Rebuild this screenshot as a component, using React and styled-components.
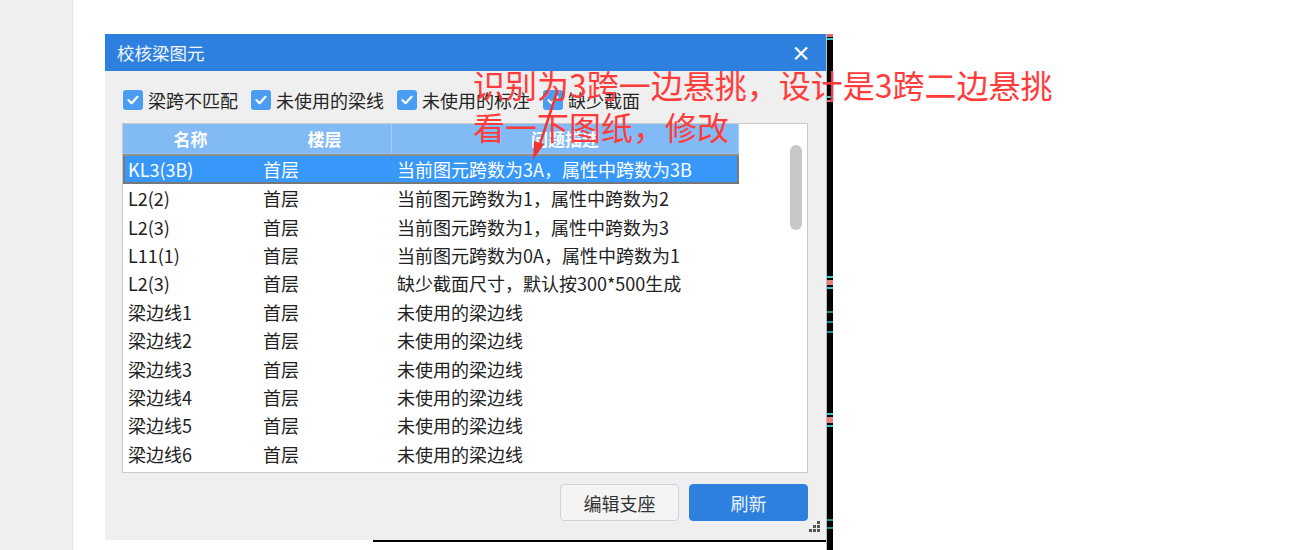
import React from "react";
import styled, { createGlobalStyle } from "styled-components";

const GlobalStyle = createGlobalStyle`
  html, body {
    margin: 0;
    padding: 0;
    background: #ffffff;
  }
  body {
    font-family: "Noto Sans CJK SC", "Noto Sans", sans-serif;
    overflow: hidden;
  }
`;

const rows = [
  { name: "KL3(3B)", floor: "首层", desc: "当前图元跨数为3A，属性中跨数为3B", selected: true },
  { name: "L2(2)", floor: "首层", desc: "当前图元跨数为1，属性中跨数为2" },
  { name: "L2(3)", floor: "首层", desc: "当前图元跨数为1，属性中跨数为3" },
  { name: "L11(1)", floor: "首层", desc: "当前图元跨数为0A，属性中跨数为1" },
  { name: "L2(3)", floor: "首层", desc: "缺少截面尺寸，默认按300*500生成" },
  { name: "梁边线1", floor: "首层", desc: "未使用的梁边线" },
  { name: "梁边线2", floor: "首层", desc: "未使用的梁边线" },
  { name: "梁边线3", floor: "首层", desc: "未使用的梁边线" },
  { name: "梁边线4", floor: "首层", desc: "未使用的梁边线" },
  { name: "梁边线5", floor: "首层", desc: "未使用的梁边线" },
  { name: "梁边线6", floor: "首层", desc: "未使用的梁边线" },
];

const filters = ["梁跨不匹配", "未使用的梁线", "未使用的标注", "缺少截面"];

const Page = styled.div`
  position: relative;
  display: flex;
  height: 550px;
  width: 1313px;
`;

const Sidebar = styled.div`
  width: 72px;
  flex: none;
  background: #eff0f2;
  border-right: 1px solid #e3e5e8;
  box-shadow: 1px 0 2px rgba(0, 0, 0, 0.04);
`;

const Stage = styled.div`
  display: flex;
  align-items: flex-start;
  margin: 34px 0 0 32px;
`;

const DialogColumn = styled.div`
  display: flex;
  flex-direction: column;
`;

const Dialog = styled.div`
  width: 721px;
  height: 506px;
  background: #efefef;
  display: flex;
  flex-direction: column;
`;

const TitleBar = styled.div`
  height: 37px;
  flex: none;
  background: #2e80df;
  display: flex;
  align-items: center;
  justify-content: space-between;
  padding: 0 15px 0 12px;
  color: #f2f6fc;
  font-size: 17.5px;
`;

const CloseButton = styled.span`
  font-size: 20px;
  font-weight: bold;
  color: #ffffff;
  line-height: 1;
`;

const Body = styled.div`
  flex: 1;
  display: flex;
  flex-direction: column;
  padding: 19px 18px 0 17px;
  position: relative;
`;

const FilterRow = styled.div`
  display: flex;
  align-items: center;
  gap: 13px;
  height: 20px;
  padding-left: 1px;
`;

const Filter = styled.label`
  display: flex;
  align-items: center;
  gap: 5px;
  font-size: 18px;
  color: #262626;
  white-space: nowrap;
`;

const Box = styled.span`
  width: 20px;
  height: 20px;
  border-radius: 3px;
  background: #4b9df2;
  display: flex;
  align-items: center;
  justify-content: center;
`;

const Table = styled.div`
  margin-top: 13px;
  height: 348px;
  border: 1px solid #c9c9c9;
  background: #ffffff;
  display: flex;
  overflow: hidden;
`;

const Grid = styled.div`
  width: 616px;
  flex: none;
  display: grid;
  grid-template-columns: 135px 134px 347px;
  grid-template-rows: 30px 30px;
  grid-auto-rows: 28.4px;
  align-content: start;
`;

const HeadCell = styled.div`
  background: #82baf6;
  color: #ffffff;
  font-weight: bold;
  font-size: 17px;
  display: flex;
  align-items: center;
  justify-content: center;
  border-right: ${(p) => (p.$sep ? "1px solid #a9cdf2" : "none")};
  border-bottom: 1px solid #9fc3ea;
  box-sizing: border-box;
`;

const Row = styled.div`
  display: contents;
`;

const Cell = styled.div`
  display: flex;
  align-items: center;
  padding-left: ${(p) => p.$pad}px;
  font-size: 18px;
  white-space: nowrap;
  color: ${(p) => (p.$selected ? "#ffffff" : "#222222")};
  background: ${(p) => (p.$selected ? "#3798fa" : "transparent")};
  box-shadow: ${(p) =>
    p.$selected
      ? `inset 0 2px 0 #8f8f8f, inset 0 -2px 0 #777777${p.$first ? ", inset 2px 0 0 #7a7a7a" : ""}${p.$last ? ", inset -2px 0 0 #7a7a7a" : ""}`
      : "none"};
`;

const ScrollTrack = styled.div`
  flex: 1;
  padding: 21px 0 0 51px;
`;

const Thumb = styled.div`
  width: 12px;
  height: 85px;
  border-radius: 6px;
  background: #c8c8c8;
`;

const Footer = styled.div`
  display: flex;
  justify-content: flex-end;
  gap: 10px;
  margin-top: 11px;
`;

const Button = styled.button`
  width: 119px;
  height: 37px;
  border-radius: 4px;
  font-family: inherit;
  font-size: 18px;
  cursor: pointer;
  border: 1px solid ${(p) => (p.$primary ? "#2e80df" : "#cdd2da")};
  background: ${(p) => (p.$primary ? "#2e80df" : "#f4f4f4")};
  color: ${(p) => (p.$primary ? "#eaf2fd" : "#333333")};
`;

const Grip = styled.div`
  position: absolute;
  right: 6px;
  bottom: 8px;
  display: grid;
  grid-template-columns: repeat(3, 3px);
  grid-template-rows: repeat(3, 3px);
  gap: 1px;
`;

const Dot = styled.span`
  background: ${(p) => (p.$on ? "#555555" : "transparent")};
`;

const BottomEdge = styled.div`
  height: 2px;
  margin-left: 268px;
  background: #000000;
`;

const CadEdge = styled.div`
  width: 6px;
  height: 516px;
  background: #000000;
  border-left: 1px solid #bdbdbd;
  display: flex;
  flex-direction: column;
`;

const Tick = styled.span`
  height: ${(p) => p.$h}px;
  margin-top: ${(p) => p.$at}px;
  background: ${(p) => p.$color};
`;

const Note = styled.div`
  position: absolute;
  left: 473px;
  top: 63px;
  font-size: 32px;
  line-height: 42px;
  color: #ff3b3b;
  white-space: nowrap;
  pointer-events: none;
`;

const Arrow = styled.svg`
  position: absolute;
  left: 520px;
  top: 85px;
  pointer-events: none;
`;

const Check = () => (
  <svg width="14" height="14" viewBox="0 0 14 14">
    <polyline
      points="2.5,7.2 5.6,10.2 11.5,3.8"
      fill="none"
      stroke="#ffffff"
      strokeWidth="2.2"
      strokeLinecap="round"
      strokeLinejoin="round"
    />
  </svg>
);

const gripDots = [0, 0, 1, 0, 1, 1, 1, 1, 1];

const App = () => {
  return (
    <Page>
      <GlobalStyle />
      <Sidebar />
      <Stage>
        <DialogColumn>
          <Dialog>
            <TitleBar>
              <span>校核梁图元</span>
              <CloseButton>×</CloseButton>
            </TitleBar>
            <Body>
              <FilterRow>
                {filters.map((f) => (
                  <Filter key={f}>
                    <Box>
                      <Check />
                    </Box>
                    {f}
                  </Filter>
                ))}
              </FilterRow>
              <Table>
                <Grid>
                  <HeadCell>名称</HeadCell>
                  <HeadCell $sep>楼层</HeadCell>
                  <HeadCell $sep>问题描述</HeadCell>
                  {rows.map((r, i) => (
                    <Row key={i}>
                      <Cell $pad={5} $selected={r.selected} $first>
                        {r.name}
                      </Cell>
                      <Cell $pad={5} $selected={r.selected}>
                        {r.floor}
                      </Cell>
                      <Cell $pad={5} $selected={r.selected} $last>
                        {r.desc}
                      </Cell>
                    </Row>
                  ))}
                </Grid>
                <ScrollTrack>
                  <Thumb />
                </ScrollTrack>
              </Table>
              <Footer>
                <Button>编辑支座</Button>
                <Button $primary>刷新</Button>
              </Footer>
              <Grip>
                {gripDots.map((d, i) => (
                  <Dot key={i} $on={d} />
                ))}
              </Grip>
            </Body>
          </Dialog>
          <BottomEdge />
        </DialogColumn>
        <CadEdge>
          <Tick $at={0} $h={3} $color="#e46a6a" />
          <Tick $at={1} $h={2} $color="#3cc8c8" />
          <Tick $at={56} $h={2} $color="#3cc8c8" />
          <Tick $at={2} $h={2} $color="#e46a6a" />
          <Tick $at={174} $h={2} $color="#3cc8c8" />
          <Tick $at={2} $h={5} $color="#e88080" />
          <Tick $at={2} $h={2} $color="#3cc8c8" />
          <Tick $at={22} $h={2} $color="#1d8f90" />
          <Tick $at={8} $h={2} $color="#1d8f90" />
          <Tick $at={8} $h={2} $color="#1d8f90" />
          <Tick $at={80} $h={2} $color="#3cc8c8" />
          <Tick $at={2} $h={6} $color="#e88080" />
          <Tick $at={2} $h={2} $color="#3cc8c8" />
          <Tick $at={92} $h={2} $color="#1d8f90" />
          <Tick $at={6} $h={2} $color="#1d8f90" />
        </CadEdge>
      </Stage>
      <Note>
        识别为3跨一边悬挑，设计是3跨二边悬挑
        <br />
        看一下图纸，修改
      </Note>
      <Arrow width="50" height="80" viewBox="0 0 50 80">
        <line x1="37" y1="7" x2="19" y2="62" stroke="#f03434" strokeWidth="2.5" />
        <polygon points="13,75 14,56 24,59" fill="#f03434" />
      </Arrow>
    </Page>
  );
};

export default App;
